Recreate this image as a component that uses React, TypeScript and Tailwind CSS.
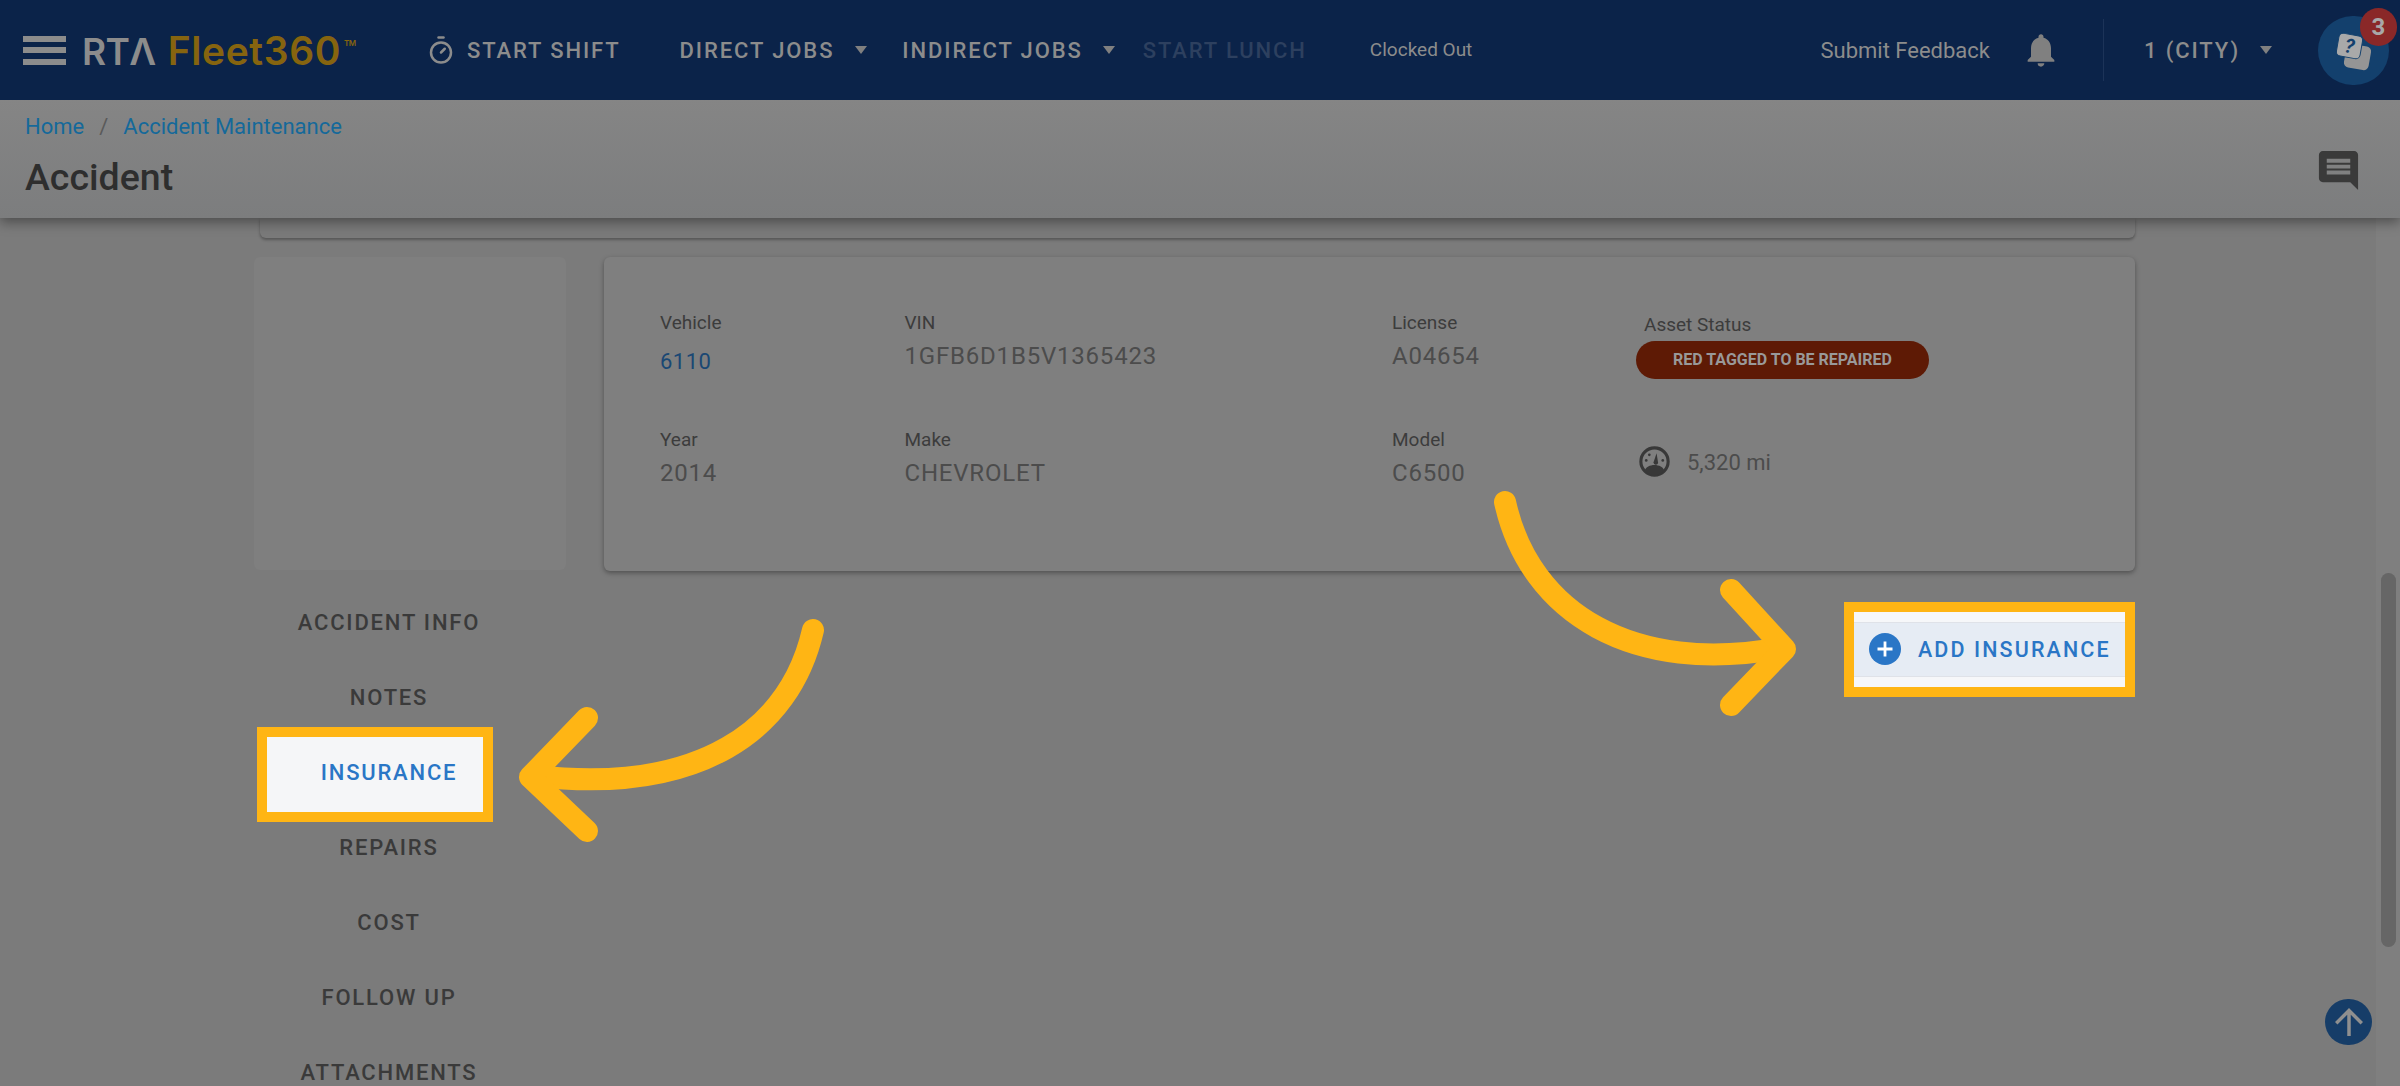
import { Timer } from "lucide-react";
import { MdArrowUpward, MdComment, MdNotifications } from "react-icons/md";

const tabs = ["ACCIDENT INFO", "NOTES", "INSURANCE", "REPAIRS", "COST", "FOLLOW UP", "ATTACHMENTS"];

function Caret({ className }: { className: string }) {
  return (
    <svg viewBox="0 0 12 8" className={`h-[8px] w-[12px] ${className}`}>
      <path d="M0 0h12L6 8z" fill="#808080" />
    </svg>
  );
}

function Field({ label, value, link }: { label: string; value: string; link?: boolean }) {
  return (
    <div>
      <div className="h-[24px] text-[19px] leading-[24px] text-[#3c3c3c]">{label}</div>
      {link ? (
        <div className="mt-[13px] text-[22px] leading-[28px] tracking-[0.5px] text-[#1a4874]">{value}</div>
      ) : (
        <div className="mt-[5px] text-[24px] leading-[32px] tracking-[0.8px] text-[#4c4c4c]">{value}</div>
      )}
    </div>
  );
}

function Gauge() {
  return (
    <svg viewBox="0 0 30 30" className="h-[31px] w-[31px]">
      <circle cx="15" cy="15" r="13.2" fill="none" stroke="#383838" strokeWidth="3" />
      <path d="M5.5 24a13 13 0 0 0 19 0c-1-3.5-5-5.5-9.500-5.500s-8.500 2-9.500 5.500z" fill="#383838" />
      <path d="M14 16l3-9 1.500 9.500a2.300 2.300 0 0 1-4.500-.5z" fill="#383838" />
      <circle cx="7" cy="14" r="1.300" fill="#383838" />
      <circle cx="10" cy="8.500" r="1.300" fill="#383838" />
      <circle cx="23" cy="14" r="1.300" fill="#383838" />
    </svg>
  );
}

function HelpButton() {
  return (
    <div className="relative flex h-[69px] w-[71px] items-center justify-center rounded-full bg-[#13406d]">
      <span className="absolute left-[27px] top-[29px] h-[24px] w-[25px] rotate-[10deg] rounded-[5px] bg-[#959595]" />
      <span className="absolute left-[19px] top-[18px] flex h-[24px] w-[25px] rotate-[10deg] items-center justify-center rounded-[5px] border-[1px] border-[#13406d] bg-[#a9a9a9] text-[20px] font-bold italic leading-none text-[#13406d]">
        ?
      </span>
      <span className="absolute -right-[8px] -top-[8px] flex h-[38px] w-[37px] items-center justify-center rounded-full bg-[#8a2828] text-[24px] font-bold text-[#a8a8a8]">
        3
      </span>
    </div>
  );
}

export default function App() {
  return (
    <div className="relative flex h-[1086px] w-[2400px] flex-col overflow-hidden bg-[#7b7b7b] font-['Roboto',sans-serif]">
      <header className="relative z-20 flex h-[100px] shrink-0 items-center bg-[#0b2349] text-[#8c8c8c]">
        <div className="ml-[23px] flex w-[43px] flex-col gap-[5.500px]">
          <span className="h-[6px] bg-[#8c8c8c]" />
          <span className="h-[6px] bg-[#8c8c8c]" />
          <span className="h-[6px] bg-[#8c8c8c]" />
        </div>
        <div className="ml-[16px] flex w-[345px] items-baseline font-['Inter',sans-serif] text-[37px] font-semibold leading-none tracking-[-0.6px]">
          <span className="text-[#8c8c8c]">RTΛ</span>
          <span className="ml-[12px] text-[39px] tracking-[0.6px] text-[#86640f]">Fleet360</span>
          <span className="relative -top-[19px] ml-[3px] text-[8px] text-[#86640f]">TM</span>
        </div>
        <Timer className="-ml-[1px] h-[32px] w-[30px]" strokeWidth={2} />
        <div className="ml-[11px] flex items-center text-[22px] font-medium tracking-[1.900px]">
          <span>START SHIFT</span>
          <span className="ml-[59px]">DIRECT JOBS</span>
          <Caret className="ml-[21px]" />
          <span className="ml-[35px]">INDIRECT JOBS</span>
          <Caret className="ml-[20px]" />
          <span className="ml-[28px] text-[#2d405f]">START LUNCH</span>
        </div>
        <span className="ml-[63px] text-[19px]">Clocked Out</span>
        <span className="ml-auto text-[22px]">Submit Feedback</span>
        <MdNotifications className="ml-[31px] h-[40px] w-[40px] text-[#808080]" />
        <span className="ml-[42px] h-[62px] w-[1px] bg-[#1c3358]" />
        <span className="ml-[40px] text-[22px] font-medium tracking-[1.900px]">1 (CITY)</span>
        <Caret className="ml-[20px]" />
        <div className="ml-[46px] mr-[11px]">
          <HelpButton />
        </div>
      </header>

      <div className="relative z-10 flex h-[118px] shrink-0 justify-between bg-linear-to-b from-[#858585] to-[#7c7d7e] pl-[25px] pr-[38px] shadow-[0_4px_12px_rgba(0,0,0,0.4)]">
        <div>
          <div className="mt-[13px] flex text-[22px] leading-[28px] text-[#15699a]">
            <span>Home</span>
            <span className="mx-[15px] text-[#5a5a5a]">/</span>
            <span>Accident Maintenance</span>
          </div>
          <div className="mt-[14px] text-[37.500px] font-medium leading-[44px] text-[#2e2e2e]">Accident</div>
        </div>
        <MdComment className="mt-[47px] h-[47px] w-[47px] text-[#3a3a3a]" />
      </div>

      <div className="flex min-h-0 flex-1">
        <main className="ml-[254px] w-[1881px] shrink-0">
          <div className="ml-[6px] h-[20px] rounded-b-[6px] bg-[#7a7a7a] shadow-[0_2px_3px_rgba(0,0,0,0.3)]" />
          <div className="mt-[19px] flex gap-[38px]">
            <div className="h-[313px] w-[312px] rounded-[6px] bg-[#7f7f7f]" />
            <div className="h-[314px] flex-1 rounded-[6px] bg-[#7f7f7f] pl-[56px] pt-[54px] shadow-[0_2px_5px_rgba(0,0,0,0.35)]">
              <div className="grid h-[117px] grid-cols-[244.500px_487.500px_253px_1fr]">
                <Field label="Vehicle" value="6110" link />
                <Field label="VIN" value="1GFB6D1B5V1365423" />
                <Field label="License" value="A04654" />
                <div>
                  <div className="-ml-[1px] mt-[2px] h-[24px] text-[19px] leading-[24px] text-[#3c3c3c]">Asset Status</div>
                  <div className="-ml-[9px] mt-[4px] flex h-[38px] w-[293px] items-center justify-center rounded-full bg-[#5e1a05] text-[16px] font-bold text-[#999999]">
                    RED TAGGED TO BE REPAIRED
                  </div>
                </div>
              </div>
              <div className="grid grid-cols-[244.500px_487.500px_253px_1fr]">
                <Field label="Year" value="2014" />
                <Field label="Make" value="CHEVROLET" />
                <Field label="Model" value="C6500" />
                <div className="-ml-[6px] mt-[5px] flex items-center gap-[17px]">
                  <Gauge />
                  <span className="mt-[3px] text-[22px] text-[#4c4c4c]">5,320 mi</span>
                </div>
              </div>
            </div>
          </div>

          <div className="flex items-start justify-between">
            <nav className="mt-[14px] w-[270px]">
              {tabs.map((tab) =>
                tab === "INSURANCE" ? (
                  <div key={tab} className="relative flex h-[75px] items-center justify-center text-[22px] font-medium tracking-[1.800px] text-[#2a76c6]">
                    <div className="absolute left-[3px] top-[-8px] h-[95px] w-[236px] border-[10px] border-[#ffb514] bg-[#f5f6f8]" />
                    <span className="relative">{tab}</span>
                  </div>
                ) : (
                  <div key={tab} className="flex h-[75px] items-center justify-center text-[22px] font-medium tracking-[1.800px] text-[#3a3a3a]">
                    {tab}
                  </div>
                )
              )}
            </nav>
            <div className="mt-[31px] h-[95px] w-[291px] border-[10px] border-[#ffb514] bg-[#f6f7f9] pt-[10px]">
              <button className="flex h-[55px] w-full items-center border-y-[1px] border-[#dfe2e8] bg-[#e6ecf4] pl-[15px] text-[21.500px] font-medium tracking-[2.100px] text-[#2a76c6]">
                <svg viewBox="0 0 32 32" className="-mt-[2px] h-[32px] w-[32px]">
                  <circle cx="16" cy="16" r="16" fill="#2a76c6" />
                  <path d="M16 8.500v15M8.500 16h15" stroke="#fff" strokeWidth="2.800" />
                </svg>
                <span className="ml-[17px] mt-[1px]">ADD INSURANCE</span>
              </button>
            </div>
          </div>
        </main>

        <aside className="ml-auto w-[24px] bg-[#7f7f7f] pl-[5px] pt-[355px]">
          <div className="h-[374px] w-[15px] rounded-full bg-[#666666]" />
        </aside>
      </div>

      <button className="absolute left-[2325px] top-[999px] flex h-[46px] w-[47px] items-center justify-center rounded-full bg-[#163d68] text-[#8f8f8f]">
        <MdArrowUpward className="h-[42px] w-[42px]" />
      </button>

      {/* annotation arrows drawn over the page */}
      <svg viewBox="0 0 2400 1086" className="pointer-events-none absolute inset-0 z-30 h-[1086px] w-[2400px]" fill="none" stroke="#ffb514" strokeWidth="22" strokeLinecap="round" strokeLinejoin="round">
        <path d="M1505 502C1530 615 1635 675 1780 648" />
        <path d="M1731 590L1785 649L1731 705" />
        <path d="M813 630C790 730 700 795 535 776" />
        <path d="M587 718L530 777L587 831" />
      </svg>
    </div>
  );
}
